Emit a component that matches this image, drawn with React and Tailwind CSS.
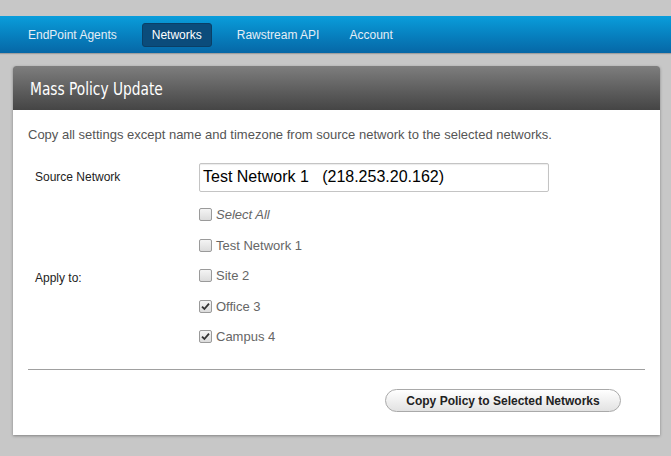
import React from 'react';

const networks = [
  { name: 'Select All', italic: true, checked: false },
  { name: 'Test Network 1', checked: false },
  { name: 'Site 2', checked: false },
  { name: 'Office 3', checked: true },
  { name: 'Campus 4', checked: true },
];

const Checkbox = ({ checked }) => (
  <span className="w-[13px] h-[13px] rounded-[2px] border border-[#9a9a9a] bg-gradient-to-b from-[#f4f4f4] to-[#dcdcdc] flex items-center justify-center shrink-0">
    {checked && (
      <svg width="9" height="9" viewBox="0 0 9 9">
        <path d="M1 4.6 L3.4 7 L8 1.6" fill="none" stroke="#333" strokeWidth="1.8" />
      </svg>
    )}
  </span>
);

const App = () => {
  return (
    <div className="w-[671px] h-[456px] bg-[#c7c7c7] pt-4 overflow-hidden" style={{ fontFamily: '"Liberation Sans", Arial, sans-serif' }}>
      <nav className="h-[37px] bg-gradient-to-b from-[#0a9ddb] to-[#0667a6] flex items-center pl-[28px] text-[12px] shadow-[0_1px_1px_rgba(0,0,0,0.2)]">
        <span className="text-[#e4eef6]">EndPoint Agents</span>
        <span className="ml-[25px] h-[24px] px-[9px] flex items-center rounded-[3px] bg-[#0b4c7b] border border-[#0a3f66] text-white">
          Networks
        </span>
        <span className="ml-[25px] text-[#e4eef6]">Rawstream API</span>
        <span className="ml-[30px] text-[#e4eef6]">Account</span>
      </nav>

      <div className="mx-[13px] mt-[13px] w-[647px] bg-white rounded-t-[3px] shadow-[0_1px_3px_rgba(0,0,0,0.35)]">
        <div className="h-[44px] rounded-t-[3px] bg-gradient-to-b from-[#7e7e7e] to-[#454545] flex items-center pl-[17px]">
          <h1
            className="text-white text-[18px] origin-left scale-x-[0.85] whitespace-nowrap"
            style={{ fontFamily: '"Liberation Sans Narrow", "DejaVu Sans Condensed", "DejaVu Sans", sans-serif' }}
          >
            Mass Policy Update
          </h1>
        </div>

        <div className="px-[15px] pt-[15px] pb-[23px]">
          <p className="text-[13px] text-[#555]">
            Copy all settings except name and timezone from source network to the selected networks.
          </p>

          <div className="mt-[18px] flex items-center">
            <span className="w-[171px] pl-[7px] text-[12px] text-[#222]">Source Network</span>
            <div className="w-[350px] h-[29px] border border-[#c4c4c4] rounded-[2px] flex items-center pl-[3px] text-[16px] text-black whitespace-pre shadow-[inset_0_1px_1px_rgba(0,0,0,0.08)]">
              {'Test Network 1   (218.253.20.162)'}
            </div>
          </div>

          <div className="flex items-center mt-[8px]">
            <span className="w-[171px] pl-[7px] text-[12px] text-[#222] pt-[4px]">Apply to:</span>
            <div className="flex flex-col">
              {networks.map((n) => (
                <label key={n.name} className="h-[30.5px] flex items-center gap-[4px] text-[13px] text-[#666]">
                  <Checkbox checked={n.checked} />
                  <span className={n.italic ? 'italic' : ''}>{n.name}</span>
                </label>
              ))}
            </div>
          </div>

          <div className="mt-[17px] border-t border-[#a0a0a0]" />

          <div className="flex justify-end pr-[24px] mt-[19px]">
            <button className="w-[236px] h-[23px] rounded-full border border-[#a9a9a9] bg-gradient-to-b from-[#ffffff] to-[#e2e2e2] text-[12px] font-bold text-[#222] flex items-center justify-center">
              Copy Policy to Selected Networks
            </button>
          </div>
        </div>
      </div>
    </div>
  );
};

export default App;
